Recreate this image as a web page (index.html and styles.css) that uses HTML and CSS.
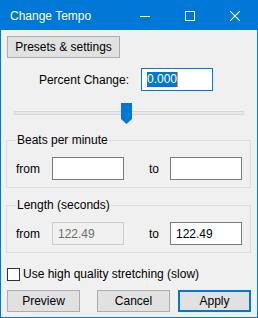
FILE: index.html
```html
<!DOCTYPE html>
<html lang="en">
<head>
  <meta charset="UTF-8" />
  <title>Change Tempo</title>
  <link rel="stylesheet" href="styles.css">
</head>
<body>
  <div class="window">
    <div class="titlebar">
      <span class="title">Change Tempo</span>
      <div class="caption-buttons">
        <span class="cap-btn">
          <svg width="10" height="10" viewBox="0 0 10 10"><path d="M0 5.5h10" stroke="#fff" stroke-width="1"/></svg>
        </span>
        <span class="cap-btn">
          <svg width="10" height="10" viewBox="0 0 10 10"><rect x="0.5" y="0.5" width="9" height="9" fill="none" stroke="#fff" stroke-width="1"/></svg>
        </span>
        <span class="cap-btn">
          <svg width="10" height="10" viewBox="0 0 10 10"><path d="M0 0L10 10M10 0L0 10" stroke="#fff" stroke-width="1.1"/></svg>
        </span>
      </div>
    </div>

    <div class="content">
      <button class="btn presets">Presets &amp; settings</button>

      <div class="percent-row">
        <label>Percent Change:</label>
        <div class="textbox focused"><span class="selected">0.000</span><span class="caret"></span></div>
      </div>

      <div class="slider">
        <div class="track"></div>
        <svg class="thumb" width="11" height="21" viewBox="0 0 11 21">
          <path d="M0 0h11v16l-5.5 5l-5.5-5z" fill="#0078d7"/>
        </svg>
      </div>

      <fieldset class="group">
        <legend>Beats per minute</legend>
        <div class="pair">
          <span class="lbl">from</span>
          <div class="textbox"></div>
          <span class="lbl to">to</span>
          <div class="textbox"></div>
        </div>
      </fieldset>

      <fieldset class="group">
        <legend>Length (seconds)</legend>
        <div class="pair">
          <span class="lbl">from</span>
          <div class="textbox disabled">122.49</div>
          <span class="lbl to">to</span>
          <div class="textbox">122.49</div>
        </div>
      </fieldset>

      <label class="check">
        <span class="box"></span>
        Use high quality stretching (slow)
      </label>

      <div class="actions">
        <button class="btn">Preview</button>
        <button class="btn">Cancel</button>
        <button class="btn default">Apply</button>
      </div>
    </div>
  </div>
</body>
</html>
```

FILE: styles.css
```css
* {
  box-sizing: border-box;
}

body {
  margin: 0;
  font-family: "Liberation Sans", Arial, sans-serif;
  font-size: 12px;
  color: #000;
}

.window {
  width: 258px;
  height: 318px;
  border: 1px solid #0078d7;
  background: #f0f0f0;
  display: flex;
  flex-direction: column;
}

.titlebar {
  height: 29px;
  background: #0078d7;
  color: #fff;
  display: flex;
  align-items: center;
  justify-content: space-between;
}

.title {
  padding-left: 9px;
  font-size: 12px;
}

.caption-buttons {
  display: flex;
}

.cap-btn {
  width: 45px;
  height: 29px;
  display: flex;
  align-items: center;
  justify-content: center;
}

.content {
  padding: 6px 6px 0 5px;
  display: flex;
  flex-direction: column;
}

.btn {
  font: inherit;
  height: 22px;
  padding: 0;
  background: #e1e1e1;
  border: 1px solid #adadad;
  color: #000;
}

.presets {
  width: 113px;
  margin-left: 1px;
}

.percent-row {
  display: flex;
  align-items: center;
  justify-content: flex-end;
  margin-top: 10px;
  padding-right: 38px;
}

.percent-row label {
  margin-right: 12px;
}

.textbox {
  width: 72px;
  height: 23px;
  background: #fff;
  border: 1px solid #7a7a7a;
  padding: 0 5px;
  display: flex;
  align-items: center;
}

.textbox.focused {
  border-color: #0078d7;
}

.textbox.disabled {
  background: #f0f0f0;
  border-color: #cccccc;
  color: #6d6d6d;
}

.selected {
  background: #0078d7;
  color: #fff;
  line-height: 15px;
}

.caret {
  width: 1px;
  height: 15px;
  background: #f7941d;
}

.slider {
  position: relative;
  height: 21px;
  margin: 12px 7px 0 8px;
}

.track {
  position: absolute;
  left: 0;
  right: 0;
  top: 8px;
  height: 4px;
  background: #e7eaea;
  border: 1px solid #d6d6d6;
}

.thumb {
  position: absolute;
  left: 107px;
  top: 0;
}

.group {
  margin: 9px 0 0 0;
  padding: 10px 8px 7px 9px;
  border: 1px solid #dcdcdc;
  min-width: 0;
}

.group + .group {
  margin-top: 10px;
}

.group legend {
  padding: 0 1px;
}

.pair {
  display: flex;
  align-items: center;
}

.lbl {
  width: 36px;
}

.lbl.to {
  width: 21px;
  margin-left: 25px;
}

.check {
  display: flex;
  align-items: center;
  margin: 14px 0 0 1px;
}

.box {
  width: 13px;
  height: 13px;
  border: 1px solid #333;
  background: #fff;
  margin-right: 3px;
}

.actions {
  display: flex;
  margin: 9px 0 0 1px;
}

.actions .btn {
  width: 73px;
}

.actions .btn + .btn {
  margin-left: 17px;
}

.actions .btn.default {
  margin-left: 8px;
  border: 2px solid #0078d7;
}
```
